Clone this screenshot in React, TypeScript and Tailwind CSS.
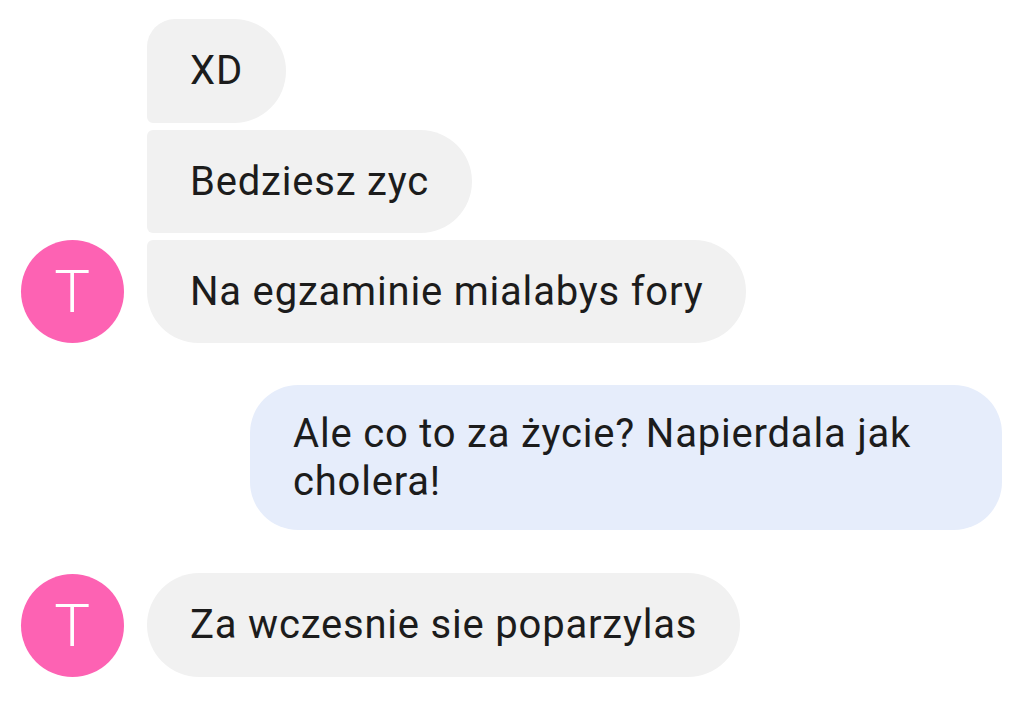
import React from "react";

const font = { fontFamily: "Roboto, 'Noto Sans', sans-serif" };

function Avatar() {
  return (
    <div className="w-[103px] h-[103px] rounded-full bg-[#fd62b3] flex items-center justify-center text-white text-[60px] leading-none font-light shrink-0">
      T
    </div>
  );
}

export default function App() {
  return (
    <div className="w-[1024px] h-[707px] bg-white overflow-hidden text-[#1c1c1c] text-[40px] leading-[48px] tracking-[0.02em]" style={font}>
      <div className="flex flex-col pt-[19px]">
        <div className="flex items-end pl-[21px] gap-[23px]">
          <Avatar />
          <div className="flex flex-col items-start gap-[7px]">
            <div className="bg-[#f1f1f1] h-[104px] flex items-center px-[43px] rounded-tl-[28px] rounded-tr-[52px] rounded-br-[52px] rounded-bl-[6px]">
              XD
            </div>
            <div className="bg-[#f1f1f1] h-[103px] flex items-center px-[43px] rounded-tl-[6px] rounded-tr-[52px] rounded-br-[52px] rounded-bl-[6px]">
              Bedziesz zyc
            </div>
            <div className="bg-[#f1f1f1] h-[103px] flex items-center px-[43px] rounded-tl-[6px] rounded-tr-[52px] rounded-br-[52px] rounded-bl-[52px]">
              Na egzaminie mialabys fory
            </div>
          </div>
        </div>
        <div className="flex justify-end pr-[22px] mt-[42px]">
          <div className="bg-[#e6edfb] w-[752px] h-[145px] flex items-center px-[43px] rounded-[48px]">
            <span>Ale co to za życie? Napierdala jak cholera!</span>
          </div>
        </div>
        <div className="flex items-end pl-[21px] gap-[23px] mt-[43px]">
          <Avatar />
          <div className="bg-[#f1f1f1] h-[104px] flex items-center px-[43px] rounded-[52px]">
            Za wczesnie sie poparzylas
          </div>
        </div>
      </div>
    </div>
  );
}
